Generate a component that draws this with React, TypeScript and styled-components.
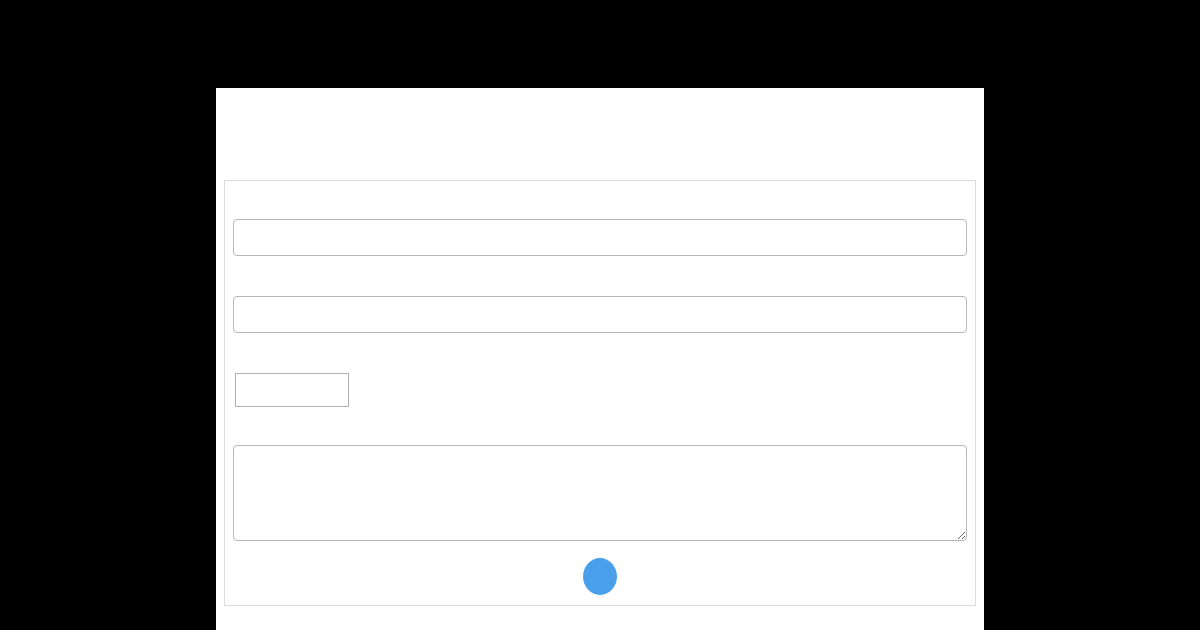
import React from "react";
import styled, { createGlobalStyle } from "styled-components";

const Global = createGlobalStyle`
  html, body { margin: 0; padding: 0; background: #000; }
  body { font-family: "Liberation Sans", Arial, sans-serif; }
  * { box-sizing: border-box; }
`;

const Page = styled.div`
  width: 768px;
  min-height: 542px;
  margin: 88px auto 0;
  background: #fff;
  padding: 92px 8px 24px;
`;

const Fieldset = styled.form`
  border: 1px solid #dcdcdc;
  padding: 38px 8px 10px;
  display: flex;
  flex-direction: column;
`;

const Field = styled.div<{ $gap: number }>`
  margin-top: ${(p) => p.$gap}px;
  &:first-child { margin-top: 0; }
`;

const TextInput = styled.input`
  display: block;
  width: 100%;
  height: 37px;
  border: 1px solid #b8b8b8;
  border-radius: 4px;
  background: #fff;
  outline: none;
`;

const SmallBox = styled.input`
  display: block;
  margin-left: 2px;
  width: 114px;
  height: 34px;
  border: 1px solid #b0b0b0;
  border-radius: 0;
  background: #fff;
  outline: none;
`;

const TextArea = styled.textarea`
  display: block;
  width: 100%;
  height: 96px;
  border: 1px solid #b8b8b8;
  border-radius: 4px;
  background: #fff;
  outline: none;
  resize: vertical;
`;

const ButtonRow = styled.div`
  display: flex;
  justify-content: center;
  margin-top: 17px;
`;

const RoundButton = styled.button`
  width: 34px;
  height: 37px;
  border: none;
  border-radius: 50%;
  background: #4a9fea;
  padding: 0;
  cursor: pointer;
`;

export default function App() {
  return (
    <>
      <Global />
      <Page>
        <Fieldset onSubmit={(e) => e.preventDefault()}>
          <Field $gap={0}>
            <TextInput type="text" aria-label="name" />
          </Field>
          <Field $gap={40}>
            <TextInput type="text" aria-label="email" />
          </Field>
          <Field $gap={40}>
            <SmallBox type="text" aria-label="code" />
          </Field>
          <Field $gap={38}>
            <TextArea aria-label="message" />
          </Field>
          <ButtonRow>
            <RoundButton type="submit" aria-label="submit" />
          </ButtonRow>
        </Fieldset>
      </Page>
    </>
  );
}
